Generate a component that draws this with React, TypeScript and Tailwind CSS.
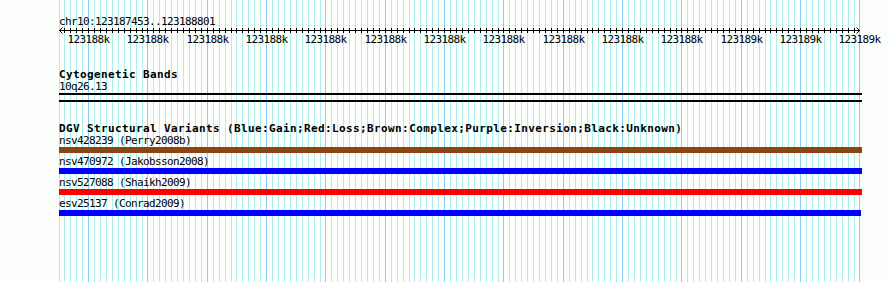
const LEFT = 59
const STEP = 5.933
const gridX = Array.from({ length: 136 }, (_, i) => Math.floor(LEFT + i * STEP))

const variants = [
  { name: 'nsv428239 (Perry2008b)', color: 'bg-[#8b4513]', width: 'w-[803px]' },
  { name: 'nsv470972 (Jakobsson2008)', color: 'bg-[#0000ff]', width: 'w-[803px]' },
  { name: 'nsv527088 (Shaikh2009)', color: 'bg-[#ff0000]', width: 'w-[803px]' },
  { name: 'esv25137 (Conrad2009)', color: 'bg-[#0000ff]', width: 'w-[802px]' },
]

function Grid() {
  return (
    <svg className="absolute inset-0" width={890} height={282}>
      {gridX.map((x, i) => (
        <rect key={i} x={x} y={0} width={1} height={282} fill={i % 10 === 5 ? '#87cefa' : '#aeeeee'} />
      ))}
    </svg>
  )
}

function Ruler() {
  const majors = gridX.filter((_, i) => i % 10 === 5)
  return (
    <svg className="block" width={890} height={20}>
      <rect x={LEFT} y={3} width={860 - LEFT} height={1} fill="#000" />
      {gridX.slice(1, -1).map((x, i) => (
        <rect key={i} x={x} y={1} width={1} height={5} fill="#000" />
      ))}
      <path d="M59.5 3.5 L62.5 0.5 M59.5 3.5 L62.5 6.5 M859.5 3.5 L856.5 0.5 M859.5 3.5 L856.5 6.5" stroke="#000" strokeWidth={1} fill="none" />
      {majors.map((x, i) => (
        <text
          key={i}
          x={x + 0.5}
          y={16}
          textAnchor="middle"
          fontSize={11}
          letterSpacing={-0.62}
          fontFamily="'DejaVu Sans Mono', monospace"
          fill="#000"
        >
          {i < 11 ? '123188k' : '123189k'}
        </text>
      ))}
    </svg>
  )
}

export default function App() {
  return (
    <div className="relative h-[282px] w-[890px] overflow-hidden bg-[#fcfefc] font-['DejaVu_Sans_Mono',monospace] text-black">
      <Grid />
      <div className="relative">
        {/* Position header */}
        <div className="h-[27px] pl-[59px] pt-[16px] text-[11px] leading-[11px] tracking-[-0.62px] whitespace-nowrap">
          chr10:123187453..123188801
        </div>
        <Ruler />

        {/* Cytogenetic bands track */}
        <div className="mt-[21px] h-[13px] pl-[59px] text-[11px] font-bold leading-[13px] tracking-[0.38px] whitespace-nowrap">
          Cytogenetic Bands
        </div>
        <div className="h-[11px] pl-[59px] text-[11px] leading-[11px] tracking-[-0.62px] whitespace-nowrap">10q26.13</div>
        <div className="ml-[59px] mt-[1px] h-[2px] w-[803px] bg-black" />
        <div className="ml-[59px] mt-[5px] h-[2px] w-[803px] bg-black" />

        {/* DGV track */}
        <div className="mt-[20px] h-[13px] pl-[59px] text-[11px] font-bold leading-[13px] tracking-[0.38px] whitespace-nowrap">
          DGV Structural Variants (Blue:Gain;Red:Loss;Brown:Complex;Purple:Inversion;Black:Unknown)
        </div>
        <div className="flex flex-col gap-[3px]">
          {variants.map((v) => (
            <div key={v.name}>
              <div className="h-[11px] pl-[59px] text-[11px] leading-[11px] tracking-[-0.62px] whitespace-nowrap">{v.name}</div>
              <div className={`ml-[59px] mt-[1px] h-[6px] ${v.width} ${v.color}`} />
            </div>
          ))}
        </div>
      </div>
    </div>
  )
}
